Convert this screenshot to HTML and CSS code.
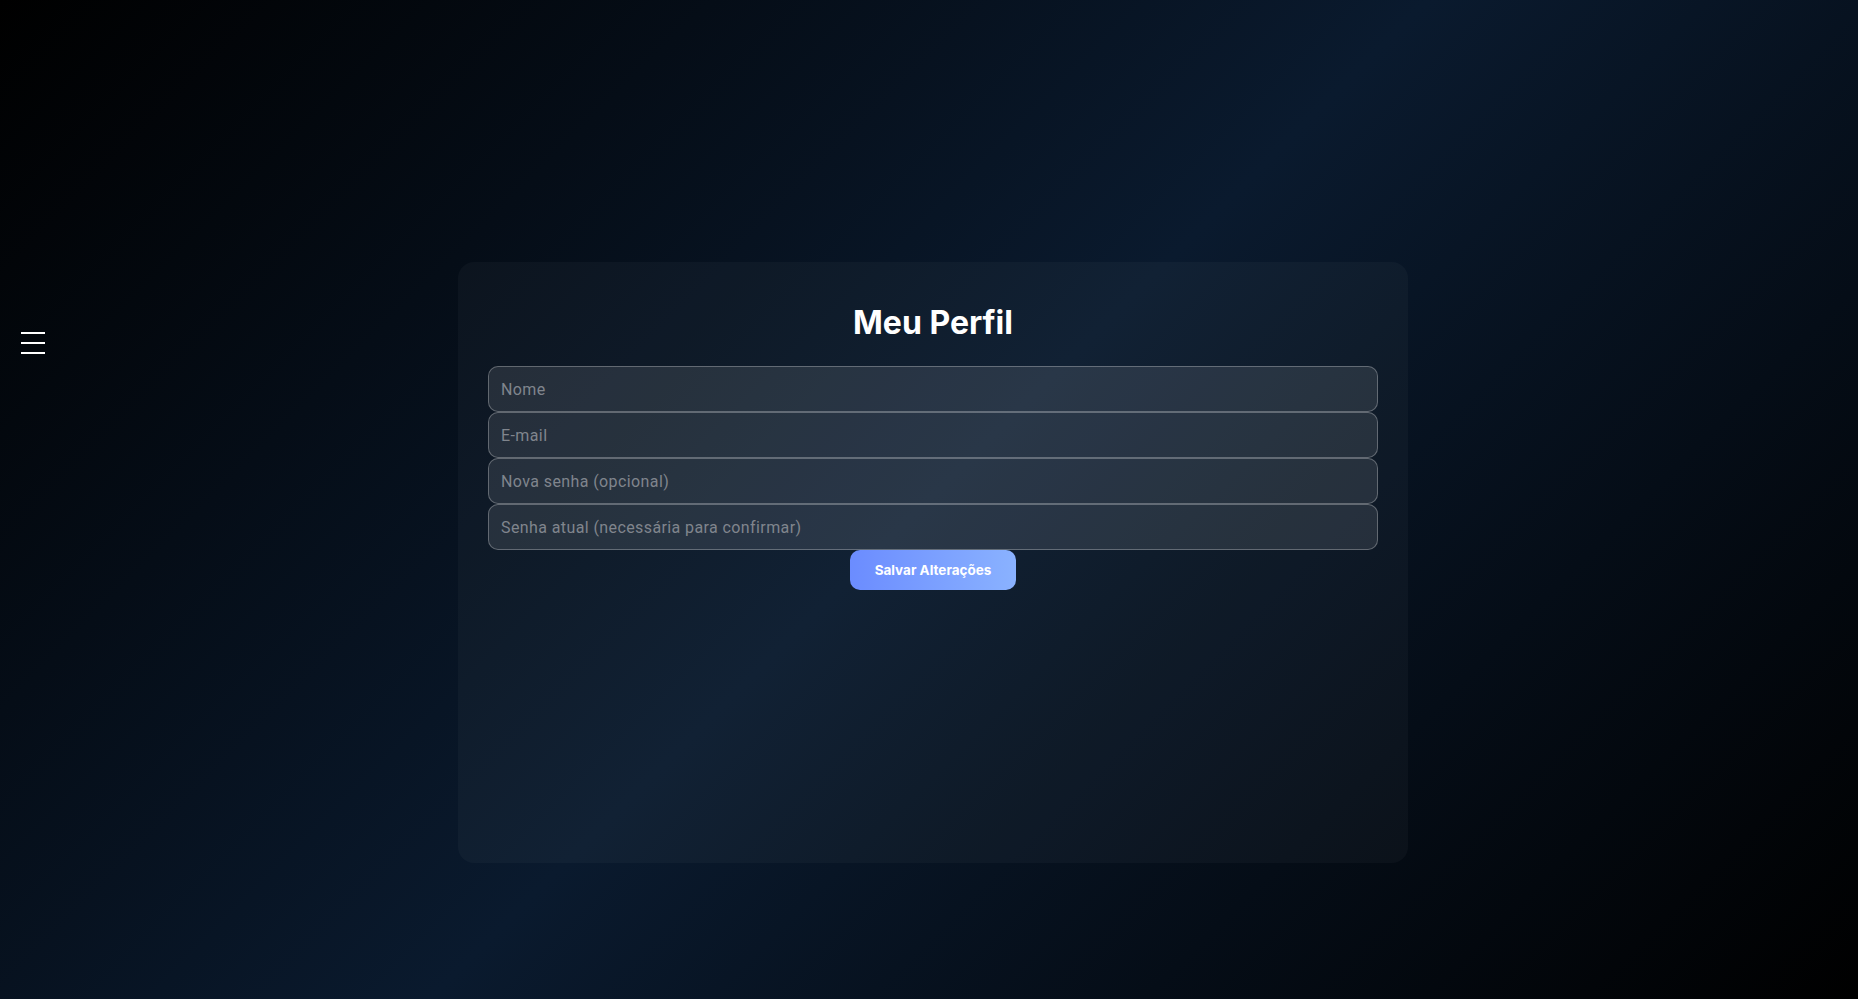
FILE: index.html
```html
<!DOCTYPE html>
<html lang="pt-BR">
<head>
<meta charset="utf-8">
<title>Meu Perfil</title>
<link rel="stylesheet" href="styles.css">
</head>
<body>
<button class="menu-toggle" aria-label="Menu"><span></span><span></span><span></span></button>
<main class="page">
  <section class="card">
    <h1 class="title">Meu Perfil</h1>
    <form class="form">
      <input class="field" type="text" placeholder="Nome">
      <input class="field" type="email" placeholder="E-mail">
      <input class="field" type="password" placeholder="Nova senha (opcional)">
      <input class="field" type="password" placeholder="Senha atual (necessária para confirmar)">
      <button class="save" type="button">Salvar Alterações</button>
    </form>
  </section>
</main>
</body>
</html>
```

FILE: styles.css
```css
* { box-sizing: border-box; }

html, body {
  margin: 0;
  height: 100%;
}

body {
  min-height: 999px;
  background: linear-gradient(135deg, #000000 0%, #0a1a2e 50%, #000000 100%);
  font-family: Inter, "Noto Sans", sans-serif;
  color: #fff;
  overflow: hidden;
}

.menu-toggle {
  position: fixed;
  left: 21px;
  top: 332px;
  width: 24px;
  height: 22px;
  padding: 0;
  border: 0;
  background: transparent;
  display: flex;
  flex-direction: column;
  justify-content: space-between;
  cursor: pointer;
}

.menu-toggle span {
  display: block;
  width: 24px;
  height: 2px;
  background: #ffffff;
}

.page {
  display: flex;
  justify-content: center;
  padding: 262px 0 0 8px;
}

.card {
  width: 950px;
  height: 601px;
  padding: 30px;
  border-radius: 16px;
  background: rgba(255, 255, 255, 0.03);
}

.title {
  margin: 13px 0 25px;
  font-family: Inter, sans-serif;
  font-size: 32px;
  line-height: 36px;
  font-weight: 700;
  letter-spacing: 0;
  text-align: center;
  color: #ffffff;
}

.form {
  display: flex;
  flex-direction: column;
}

.field {
  display: block;
  width: 100%;
  height: 46px;
  padding: 0 12px;
  border: 1px solid rgba(255, 255, 255, 0.28);
  border-radius: 10px;
  background: rgba(255, 255, 255, 0.1);
  font-family: Roboto, "Noto Sans", sans-serif;
  font-size: 16px;
  letter-spacing: 0.4px;
  color: #ffffff;
  outline: none;
}

.field::placeholder {
  color: #80858d;
}

.save {
  align-self: center;
  margin-top: 0;
  height: 40px;
  padding: 0 24.5px;
  border: 0;
  border-radius: 10px;
  background: linear-gradient(90deg, #6b8cff 0%, #8ab2ff 100%);
  font-family: Inter, sans-serif;
  font-size: 13.5px;
  font-weight: 700;
  color: #ffffff;
  cursor: pointer;
}
```
